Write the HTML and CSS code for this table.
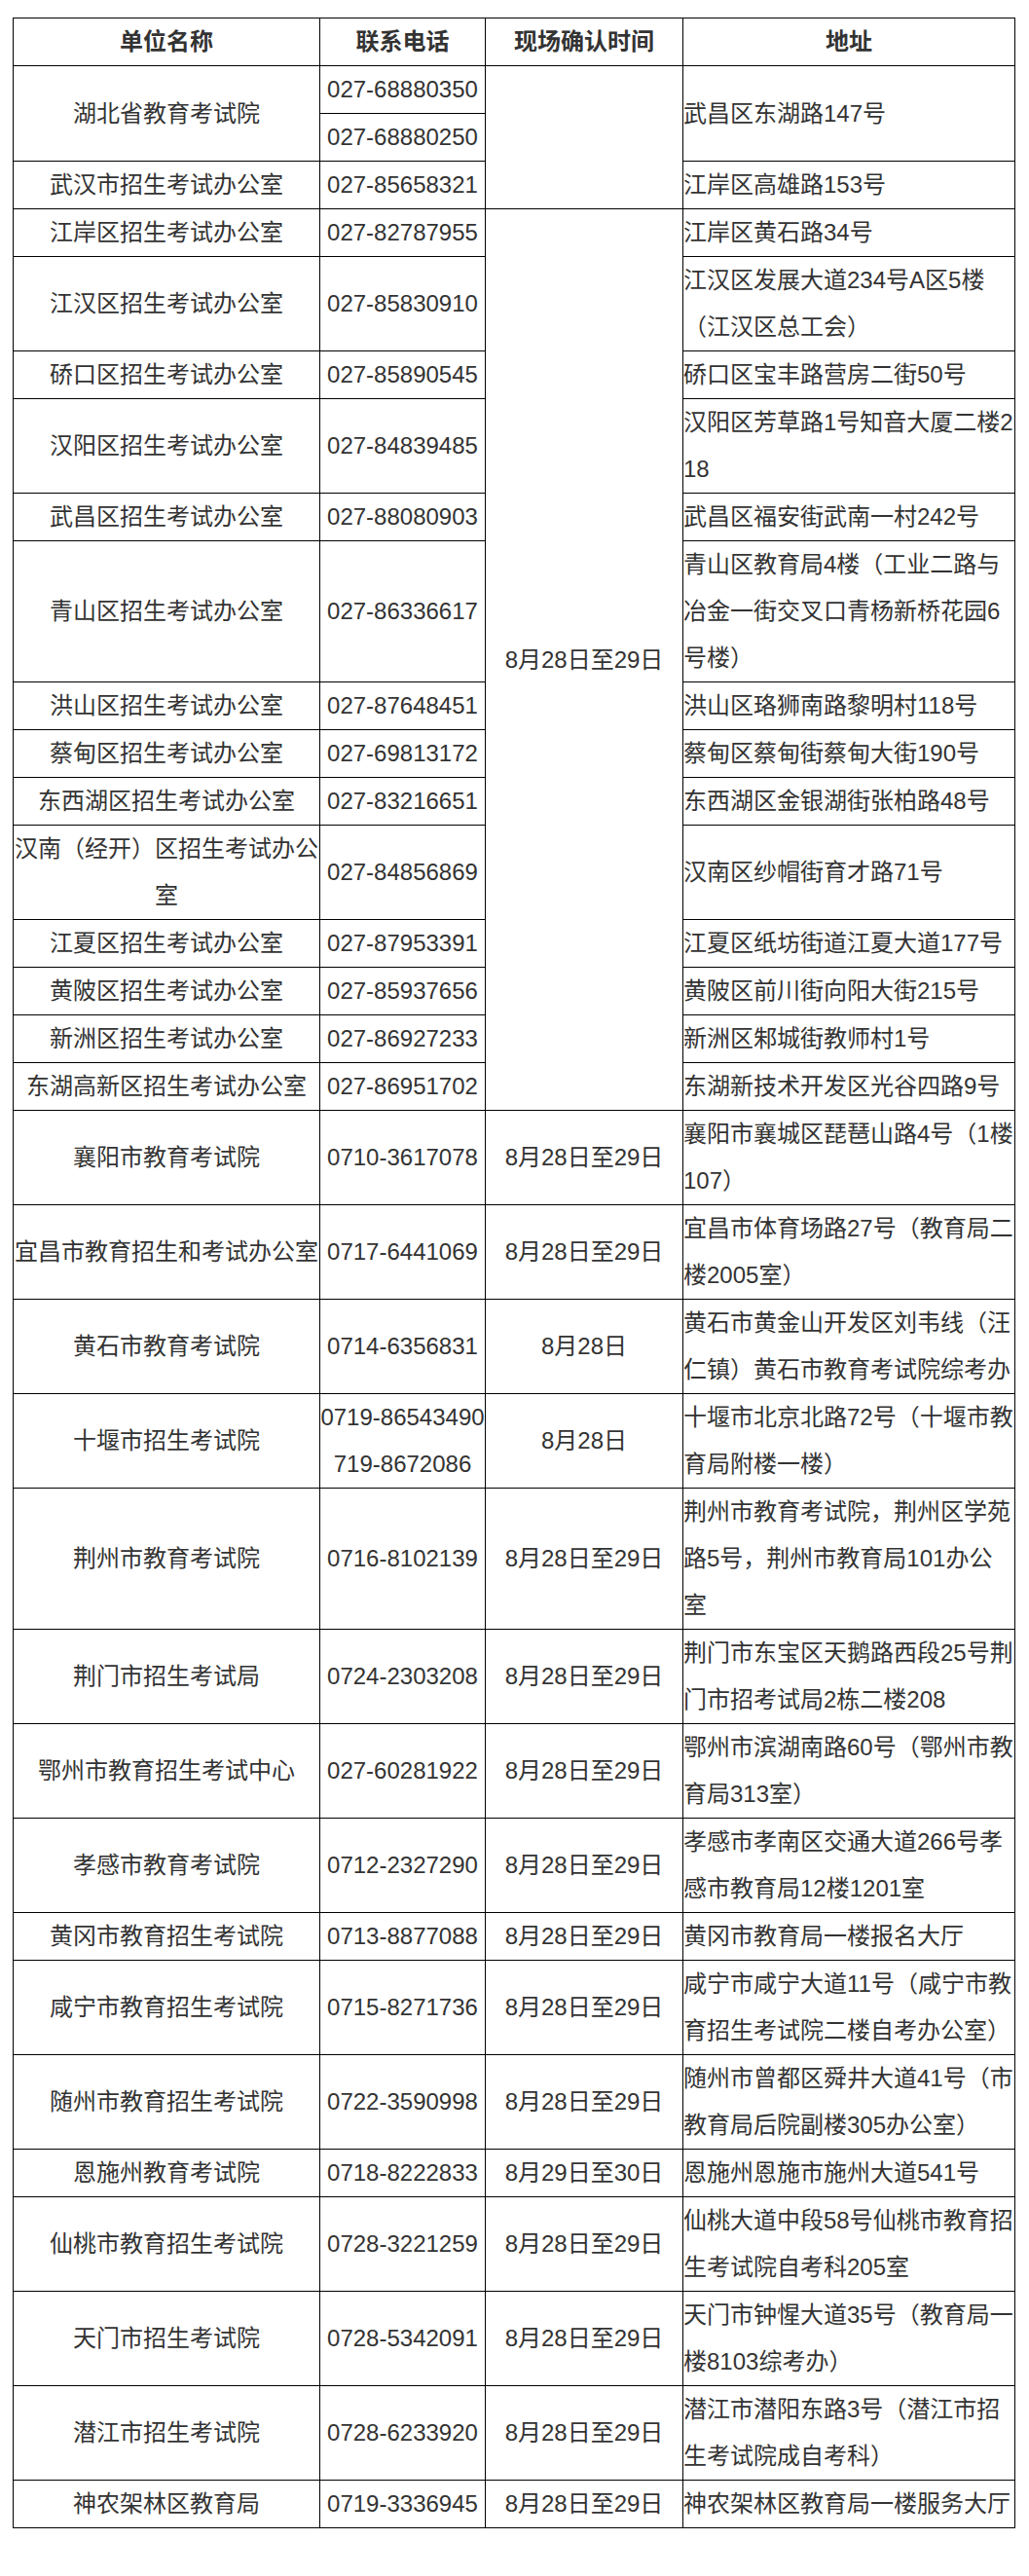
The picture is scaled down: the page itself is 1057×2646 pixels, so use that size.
FILE: index.html
```html
<!DOCTYPE html>
<html lang="zh-CN">
<head>
<meta charset="utf-8">
<title>现场确认地点</title>
<link rel="stylesheet" href="styles.css">
</head>
<body>
<table class="sheet">
  <colgroup>
    <col class="c-name">
    <col class="c-tel">
    <col class="c-date">
    <col class="c-addr">
  </colgroup>
  <thead>
    <tr><th>单位名称</th><th>联系电话</th><th>现场确认时间</th><th>地址</th></tr>
  </thead>
  <tbody>
    <tr><td rowspan="2">湖北省教育考试院</td><td>027-68880350</td><td rowspan="3"></td><td rowspan="2" class="addr">武昌区东湖路147号</td></tr>
    <tr><td>027-68880250</td></tr>
    <tr><td>武汉市招生考试办公室</td><td>027-85658321</td><td class="addr">江岸区高雄路153号</td></tr>
    <tr><td>江岸区招生考试办公室</td><td>027-82787955</td><td rowspan="14">8月28日至29日</td><td class="addr">江岸区黄石路34号</td></tr>
    <tr><td>江汉区招生考试办公室</td><td>027-85830910</td><td class="addr">江汉区发展大道234号A区5楼（江汉区总工会）</td></tr>
    <tr><td>硚口区招生考试办公室</td><td>027-85890545</td><td class="addr">硚口区宝丰路营房二街50号</td></tr>
    <tr><td>汉阳区招生考试办公室</td><td>027-84839485</td><td class="addr">汉阳区芳草路1号知音大厦二楼218</td></tr>
    <tr><td>武昌区招生考试办公室</td><td>027-88080903</td><td class="addr">武昌区福安街武南一村242号</td></tr>
    <tr><td>青山区招生考试办公室</td><td>027-86336617</td><td class="addr">青山区教育局4楼（工业二路与冶金一街交叉口青杨新桥花园6号楼）</td></tr>
    <tr><td>洪山区招生考试办公室</td><td>027-87648451</td><td class="addr">洪山区珞狮南路黎明村118号</td></tr>
    <tr><td>蔡甸区招生考试办公室</td><td>027-69813172</td><td class="addr">蔡甸区蔡甸街蔡甸大街190号</td></tr>
    <tr><td>东西湖区招生考试办公室</td><td>027-83216651</td><td class="addr">东西湖区金银湖街张柏路48号</td></tr>
    <tr><td>汉南（经开）区招生考试办公室</td><td>027-84856869</td><td class="addr">汉南区纱帽街育才路71号</td></tr>
    <tr><td>江夏区招生考试办公室</td><td>027-87953391</td><td class="addr">江夏区纸坊街道江夏大道177号</td></tr>
    <tr><td>黄陂区招生考试办公室</td><td>027-85937656</td><td class="addr">黄陂区前川街向阳大街215号</td></tr>
    <tr><td>新洲区招生考试办公室</td><td>027-86927233</td><td class="addr">新洲区邾城街教师村1号</td></tr>
    <tr><td>东湖高新区招生考试办公室</td><td>027-86951702</td><td class="addr">东湖新技术开发区光谷四路9号</td></tr>
    <tr><td>襄阳市教育考试院</td><td>0710-3617078</td><td>8月28日至29日</td><td class="addr">襄阳市襄城区琵琶山路4号（1楼107）</td></tr>
    <tr><td>宜昌市教育招生和考试办公室</td><td>0717-6441069</td><td>8月28日至29日</td><td class="addr">宜昌市体育场路27号（教育局二楼2005室）</td></tr>
    <tr><td>黄石市教育考试院</td><td>0714-6356831</td><td>8月28日</td><td class="addr">黄石市黄金山开发区刘韦线（汪仁镇）黄石市教育考试院综考办</td></tr>
    <tr><td>十堰市招生考试院</td><td>0719-86543490<br>719-8672086</td><td>8月28日</td><td class="addr">十堰市北京北路72号（十堰市教育局附楼一楼）</td></tr>
    <tr><td>荆州市教育考试院</td><td>0716-8102139</td><td>8月28日至29日</td><td class="addr">荆州市教育考试院，荆州区学苑路5号，荆州市教育局101办公室</td></tr>
    <tr><td>荆门市招生考试局</td><td>0724-2303208</td><td>8月28日至29日</td><td class="addr">荆门市东宝区天鹅路西段25号荆门市招考试局2栋二楼208</td></tr>
    <tr><td>鄂州市教育招生考试中心</td><td>027-60281922</td><td>8月28日至29日</td><td class="addr">鄂州市滨湖南路60号（鄂州市教育局313室）</td></tr>
    <tr><td>孝感市教育考试院</td><td>0712-2327290</td><td>8月28日至29日</td><td class="addr">孝感市孝南区交通大道266号孝感市教育局12楼1201室</td></tr>
    <tr><td>黄冈市教育招生考试院</td><td>0713-8877088</td><td>8月28日至29日</td><td class="addr">黄冈市教育局一楼报名大厅</td></tr>
    <tr><td>咸宁市教育招生考试院</td><td>0715-8271736</td><td>8月28日至29日</td><td class="addr">咸宁市咸宁大道11号（咸宁市教育招生考试院二楼自考办公室）</td></tr>
    <tr><td>随州市教育招生考试院</td><td>0722-3590998</td><td>8月28日至29日</td><td class="addr">随州市曾都区舜井大道41号（市教育局后院副楼305办公室）</td></tr>
    <tr><td>恩施州教育考试院</td><td>0718-8222833</td><td>8月29日至30日</td><td class="addr">恩施州恩施市施州大道541号</td></tr>
    <tr><td>仙桃市教育招生考试院</td><td>0728-3221259</td><td>8月28日至29日</td><td class="addr">仙桃大道中段58号仙桃市教育招生考试院自考科205室</td></tr>
    <tr><td>天门市招生考试院</td><td>0728-5342091</td><td>8月28日至29日</td><td class="addr">天门市钟惺大道35号（教育局一楼8103综考办）</td></tr>
    <tr><td>潜江市招生考试院</td><td>0728-6233920</td><td>8月28日至29日</td><td class="addr">潜江市潜阳东路3号（潜江市招生考试院成自考科）</td></tr>
    <tr><td>神农架林区教育局</td><td>0719-3336945</td><td>8月28日至29日</td><td class="addr">神农架林区教育局一楼服务大厅</td></tr>
  </tbody>
</table>
</body>
</html>
```

FILE: styles.css
```css
html, body {
  margin: 0;
  padding: 0;
  background: #ffffff;
}

body {
  font-family: "Liberation Sans", "Noto Sans CJK SC", sans-serif;
  font-size: 24px;
  line-height: 48px;
  color: #333333;
}

.sheet {
  border-collapse: collapse;
  table-layout: fixed;
  width: 1030px;
  margin: 18px 0 0 13px;
}

.c-name { width: 315px; }
.c-tel  { width: 170px; }
.c-date { width: 203px; }
.c-addr { width: 341px; }

.sheet th,
.sheet td {
  border: 1px solid #000000;
  padding: 0;
  text-align: center;
  vertical-align: middle;
  font-size: 24px;
  line-height: 48px;
}

.sheet th {
  font-weight: bold;
  color: #333333;
}

.sheet td.addr {
  text-align: left;
  word-break: break-all;
}
```
